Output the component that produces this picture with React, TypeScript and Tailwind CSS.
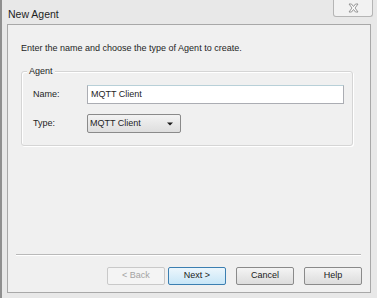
import React from "react";

const font = { fontFamily: '"Liberation Sans", Arial, sans-serif' };

function Btn({
  label,
  kind = "normal",
}: {
  label: string;
  kind?: "normal" | "primary" | "disabled";
}) {
  const cls =
    kind === "primary"
      ? "border-[#3c7fb1] bg-gradient-to-b from-[#ecf6fc] to-[#c8e6f7] text-[#1a1a1a]"
      : kind === "disabled"
        ? "border-[#c9c9c9] bg-[#f4f4f4] text-[#a3a3a3]"
        : "border-[#8a8a8a] bg-gradient-to-b from-[#f4f4f4] to-[#dcdcdc] text-[#1a1a1a]";
  return (
    <div
      className={`flex h-[18px] w-[58px] items-center justify-center rounded-[2px] border text-[9px] ${cls}`}
    >
      {label}
    </div>
  );
}

export default function App() {
  return (
    <div
      className="flex h-[298px] w-[377px] flex-col border-l-2 border-[#8f8f8f] bg-[#e8e8e8] text-[#1e1e1e]"
      style={font}
    >
      {/* title bar */}
      <div className="flex h-[24px] shrink-0 items-start justify-between">
        <div className="pl-[6px] pt-[8px] text-[10.5px] leading-[13px]">New Agent</div>
        <div className="mr-[4px] flex h-[17px] w-[40px] items-center justify-center rounded-b-[3px] border border-t-0 border-[#b5b5b5] bg-[#f2f2f2]">
          <svg width="11" height="10" viewBox="0 0 11 10">
            <path
              d="M1 1 L3.5 1 L5.5 3.5 L7.5 1 L10 1 L7 5 L10 9 L7.5 9 L5.5 6.5 L3.5 9 L1 9 L4 5 Z"
              fill="#fbfbfb"
              stroke="#8c8c8c"
              strokeWidth="0.9"
            />
          </svg>
        </div>
      </div>

      {/* content panel */}
      <div className="mb-[5px] ml-[5px] mr-[6px] flex flex-1 flex-col border border-[#a8a8a8] bg-[#f0f0f0]">
        <div className="pl-[13px] pt-[17px] text-[9px] leading-[12px]">
          Enter the name and choose the type of Agent to create.
        </div>

        {/* group box */}
        <div className="relative ml-[13px] mr-[17px] mt-[17px] h-[75px] rounded-[3px] border border-[#d5d5d5] shadow-[inset_1px_1px_0_#ffffff,1px_1px_0_#ffffff]">
          <div className="absolute -top-[7px] left-[5px] bg-[#f0f0f0] px-[2px] text-[9px] leading-[12px]">
            Agent
          </div>
          <div className="flex flex-col gap-[10px] pl-[11px] pt-[13px]">
            <div className="flex items-center">
              <div className="w-[54px] text-[9px]">Name:</div>
              <div className="flex h-[19px] w-[257px] items-center border border-[#abadb3] border-t-[#b8d0d8] bg-white pl-[3px] text-[9px]">
                MQTT Client
              </div>
            </div>
            <div className="flex items-center">
              <div className="w-[54px] text-[9px]">Type:</div>
              <div className="flex h-[19px] w-[94px] items-center justify-between rounded-[2px] border border-[#8a8a8a] bg-gradient-to-b from-[#f3f3f3] to-[#dedede] pl-[2px] pr-[7px] text-[9px]">
                <span>MQTT Client</span>
                <svg width="6" height="4" viewBox="0 0 6 4">
                  <path d="M0 0.5 H6 L3 3.5 Z" fill="#1a1a1a" />
                </svg>
              </div>
            </div>
          </div>
        </div>

        <div className="flex-1" />

        {/* separator */}
        <div className="ml-[8px] mr-[9px] border-t border-[#b9b9b9] shadow-[0_1px_0_#ffffff]" />

        {/* buttons */}
        <div className="flex justify-end pb-[7px] pr-[8px] pt-[12px]">
          <div className="flex gap-[3px]">
            <Btn label="< Back" kind="disabled" />
            <Btn label="Next >" kind="primary" />
          </div>
          <div className="ml-[10px] flex gap-[10px]">
            <Btn label="Cancel" />
            <Btn label="Help" />
          </div>
        </div>
      </div>
    </div>
  );
}
